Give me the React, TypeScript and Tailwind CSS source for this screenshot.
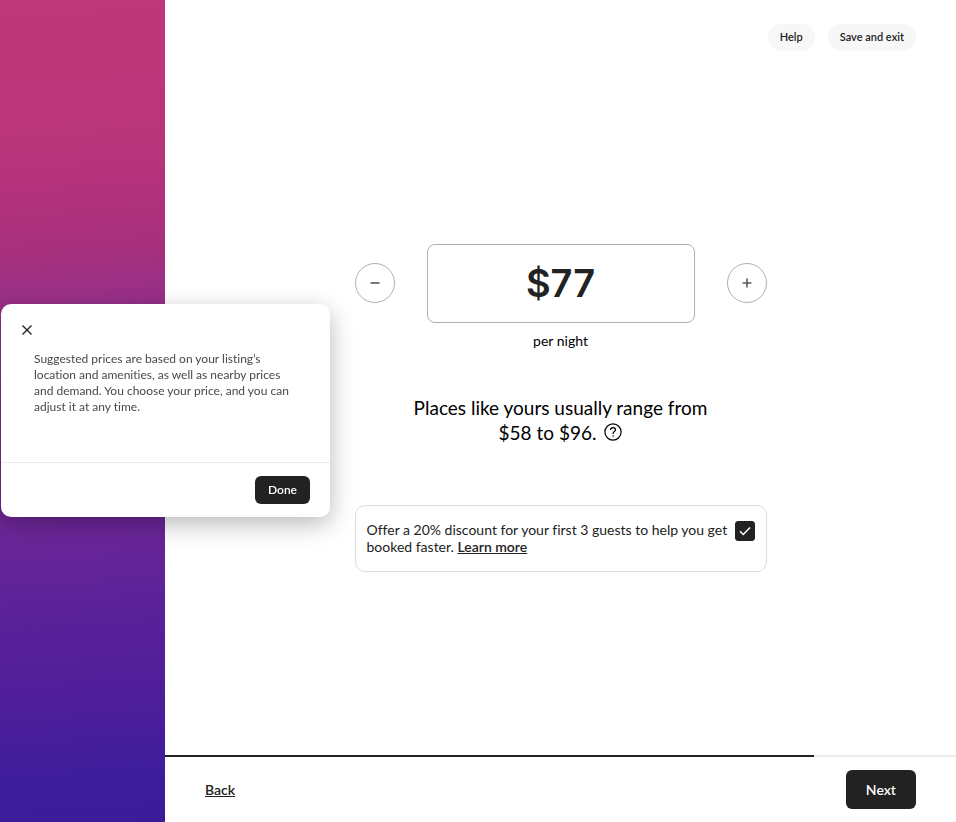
import { useState } from "react";

function MinusIcon() {
  return (
    <svg viewBox="0 0 12 12" className="size-3" fill="none" stroke="currentColor" strokeWidth="1.6" aria-hidden="true">
      <path d="M1.5 6h9" />
    </svg>
  );
}

function PlusIcon() {
  return (
    <svg viewBox="0 0 12 12" className="size-3" fill="none" stroke="currentColor" strokeWidth="1.6" aria-hidden="true">
      <path d="M1.5 6h9M6 1.5v9" />
    </svg>
  );
}

function CloseIcon() {
  return (
    <svg viewBox="0 0 12 12" className="size-3" fill="none" stroke="currentColor" strokeWidth="1.4" aria-hidden="true">
      <path d="M1.5 1.5l9 9M10.5 1.5l-9 9" />
    </svg>
  );
}

function QuestionIcon() {
  return (
    <svg viewBox="0 0 18 18" className="size-[18px]" fill="none" stroke="currentColor" strokeWidth="1.2" aria-hidden="true">
      <circle cx="9" cy="9" r="8.1" />
      <path d="M6.5 7c0-1.5 1.1-2.4 2.5-2.4s2.5.9 2.5 2.2c0 1.8-2.4 1.8-2.4 3.7v.4" />
      <circle cx="9.1" cy="13" r="0.8" fill="currentColor" stroke="none" />
    </svg>
  );
}

function SuggestionDialog({ onClose }: { onClose: () => void }) {
  return (
    <div className="pointer-events-none fixed inset-y-0 left-px flex items-center pb-px">
      <div
        role="dialog"
        aria-label="Suggested prices"
        className="pointer-events-auto w-[329px] rounded-[10px] bg-white shadow-[0_7px_24px_rgba(0,0,0,0.28)]"
      >
        <div className="px-5 pt-5">
          <button type="button" aria-label="Close" onClick={onClose} className="block text-[#222222]">
            <CloseIcon />
          </button>
        </div>
        <p className="px-[33px] pt-[15px] pb-[47px] text-[12px] leading-[16px] text-[#484848]">
          Suggested prices are based on your listing’s location and amenities, as well as nearby prices and demand. You
          choose your price, and you can adjust it at any time.
        </p>
        <div className="flex justify-end border-t border-[#ebebeb] px-5 py-[13px]">
          <button
            type="button"
            onClick={onClose}
            className="h-7 rounded-md bg-[#222222] px-[13px] text-[12px] font-semibold text-white"
          >
            Done
          </button>
        </div>
      </div>
    </div>
  );
}

export default function App() {
  const [price, setPrice] = useState(77);
  const [discount, setDiscount] = useState(true);
  const [open, setOpen] = useState(true);

  return (
    <div className="flex min-h-screen bg-white font-['Lato','Noto_Sans',sans-serif] text-[#222222] [font-variant-ligatures:none]">
      <aside className="w-[165px] shrink-0 bg-[linear-gradient(176deg,#bc3878_0%,#bb3679_15%,#b6327c_22%,#a6307e_31%,#95308a_38%,#7c2c94_50%,#6b2698_64%,#5c2299_73%,#501e9a_84%,#3f1d9b_93%,#3c1b99_100%)]" />

      <div className="flex min-w-0 flex-1 flex-col">
        <header className="flex justify-end gap-[13px] px-10 pt-6 pb-[9px]">
          <button type="button" className="h-[27px] rounded-full bg-[#f7f7f7] px-3 text-[11px] font-semibold">
            Help
          </button>
          <button type="button" className="h-[27px] rounded-full bg-[#f7f7f7] px-3 text-[11px] font-semibold">
            Save and exit
          </button>
        </header>

        <main className="flex flex-1 items-center justify-center px-6">
          <div className="w-full max-w-[412px]">
            <div className="flex items-center gap-8">
              <button
                type="button"
                aria-label="Decrease price"
                onClick={() => setPrice(price - 1)}
                className="flex size-10 shrink-0 items-center justify-center rounded-full border border-[#b0b0b0] text-[#5a5a5a]"
              >
                <MinusIcon />
              </button>
              <input
                id="price"
                value={`$${price}`}
                onChange={(e) => setPrice(Number(e.target.value.replace(/\D/g, "")))}
                className="h-[79px] w-full min-w-0 rounded-lg border border-[#b0b0b0] text-center font-['Inter',sans-serif] text-[38px] font-semibold outline-none"
              />
              <button
                type="button"
                aria-label="Increase price"
                onClick={() => setPrice(price + 1)}
                className="flex size-10 shrink-0 items-center justify-center rounded-full border border-[#b0b0b0] text-[#5a5a5a]"
              >
                <PlusIcon />
              </button>
            </div>
            <label htmlFor="price" className="block pt-2 text-center text-[14px] leading-5 text-black">
              per night
            </label>

            <p className="px-10 pt-11 text-center text-[19px] leading-[25px] text-black">
              Places like yours usually range from
              <span className="flex items-center justify-center gap-2">
                $58 to $96.
                <button type="button" aria-label="About suggested prices" onClick={() => setOpen(true)}>
                  <QuestionIcon />
                </button>
              </span>
            </p>

            <div className="mt-[60px] flex items-start gap-0.5 rounded-[10px] border border-[#dddddd] px-[11px] pt-[15px] pb-4">
              <label htmlFor="discount" className="flex-1 text-[14px] leading-[17px]">
                Offer a 20% discount for your first 3 guests to help you get booked faster.{" "}
                <a href="#learn-more" className="font-semibold underline">
                  Learn more
                </a>
              </label>
              <span className="relative size-5 shrink-0">
                <input
                  id="discount"
                  type="checkbox"
                  checked={discount}
                  onChange={(e) => setDiscount(e.target.checked)}
                  className="block size-5 appearance-none rounded-[3px] border border-[#222222] checked:bg-[#222222]"
                />
                <svg
                  viewBox="0 0 20 20"
                  className="pointer-events-none absolute inset-0 size-5 text-white"
                  fill="none"
                  stroke="currentColor"
                  strokeWidth="1.5"
                  aria-hidden="true"
                >
                  <path d="M5 10.3l3.3 3.2L15 6.6" />
                </svg>
              </span>
            </div>
          </div>
        </main>

        <footer>
          <div role="progressbar" aria-label="Listing progress" aria-valuenow={82} className="h-0.5 bg-[#ebebeb]">
            <div className="h-full w-[82%] bg-[#222222]" />
          </div>
          <div className="flex items-center justify-between px-10 py-[13px]">
            <button type="button" className="text-[14px] leading-5 font-semibold underline">
              Back
            </button>
            <button type="button" className="h-[39px] rounded-md bg-[#222222] px-5 text-[14px] font-semibold text-white">
              Next
            </button>
          </div>
        </footer>
      </div>

      {open && <SuggestionDialog onClose={() => setOpen(false)} />}
    </div>
  );
}
